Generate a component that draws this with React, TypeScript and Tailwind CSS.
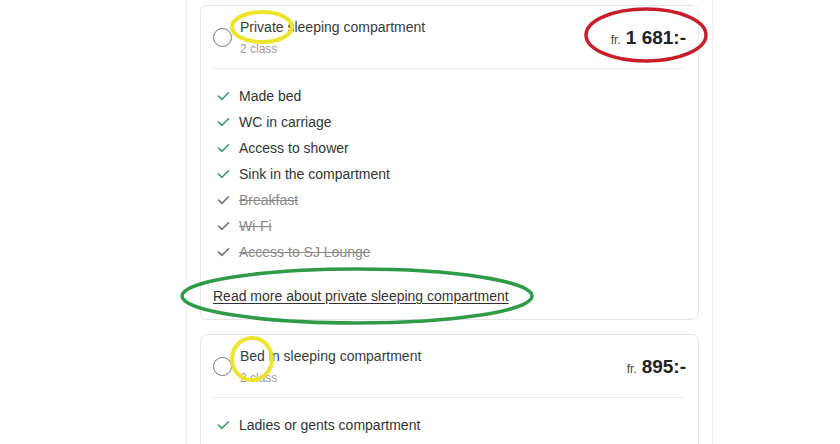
import type { JSX } from 'react'

type Feature = { label: string; included: boolean }

const privateFeatures: Feature[] = [
  { label: 'Made bed', included: true },
  { label: 'WC in carriage', included: true },
  { label: 'Access to shower', included: true },
  { label: 'Sink in the compartment', included: true },
  { label: 'Breakfast', included: false },
  { label: 'Wi-Fi', included: false },
  { label: 'Access to SJ Lounge', included: false }
]

const bedFeatures: Feature[] = [{ label: 'Ladies or gents compartment', included: true }]

function CheckMark(props: { included: boolean }): JSX.Element {
  return (
    <svg
      width="13"
      height="10"
      viewBox="0 0 13 10"
      fill="none"
      className={props.included ? 'text-[#3c9a6c]' : 'text-[#6f6f6f]'}
    >
      <path
        d="M1.5 5 L5 8.3 L11.5 1.8"
        stroke="currentColor"
        strokeWidth="1.6"
        strokeLinecap="round"
        strokeLinejoin="round"
      />
    </svg>
  )
}

function FeatureRow(props: { feature: Feature }): JSX.Element {
  const { feature } = props
  return (
    <li className="flex h-[26px] items-center gap-[9px] pl-[4px]">
      <CheckMark included={feature.included} />
      <span
        className={
          feature.included
            ? 'text-[14px] text-[#333333]'
            : 'text-[14px] text-[#8a8a8a] line-through decoration-[#8a8a8a]'
        }
      >
        {feature.label}
      </span>
    </li>
  )
}

function OptionCard(props: {
  title: string
  price: string
  features: Feature[]
  link?: string
}): JSX.Element {
  const { title, price, features, link } = props
  return (
    <div className="rounded-[7px] border border-[#e6e6e6] bg-white px-3">
      <div className="flex items-center pt-[12px] pb-[11px]">
        <span className="h-[19px] w-[19px] shrink-0 rounded-full border border-[#7a7a7a] bg-white" />
        <div className="ml-[8px] flex flex-col">
          <span className="text-[14px] leading-[18px] text-[#3a3a3a]">{title}</span>
          <span className="mt-[5px] text-[12px] leading-[16px] text-[#a0a0a0]">2 class</span>
        </div>
        <div className="ml-auto flex items-baseline gap-[5px] pt-[2px]">
          <span className="text-[12px] text-[#444444]">fr.</span>
          <span className="text-[19px] font-bold text-[#222222]">{price}</span>
        </div>
      </div>
      <div className="border-t border-[#ececec] pt-[14px] pb-[13px]">
        <ul className="flex flex-col">
          {features.map((f) => (
            <FeatureRow key={f.label} feature={f} />
          ))}
        </ul>
        {link ? (
          <a
            href="#"
            className="mt-[21px] block text-[14px] leading-[20px] text-[#333333] underline underline-offset-2"
          >
            {link}
          </a>
        ) : null}
      </div>
    </div>
  )
}

function Annotations(): JSX.Element {
  return (
    <svg className="pointer-events-none absolute inset-0" width="840" height="444" fill="none">
      <ellipse cx="262" cy="27" rx="30" ry="15" stroke="#ece52c" strokeWidth="4" />
      <ellipse cx="646" cy="35" rx="60" ry="26" stroke="#c81e2a" strokeWidth="3.5" />
      <ellipse cx="357" cy="296" rx="175" ry="27" stroke="#2f9a48" strokeWidth="3.5" />
      <ellipse cx="252" cy="359" rx="20" ry="21" stroke="#ece52c" strokeWidth="4" />
    </svg>
  )
}

export default function App(): JSX.Element {
  return (
    <div
      className="relative h-[444px] w-[840px] overflow-hidden bg-white"
      style={{ fontFamily: '"Liberation Sans", Arial, sans-serif' }}
    >
      <div className="ml-[186px] flex h-full w-[527px] flex-col gap-[14px] border-x border-[#eeeeee] pt-[5px] pr-[13px] pl-[13px]">
        <OptionCard
          title="Private sleeping compartment"
          price="1 681:-"
          features={privateFeatures}
          link="Read more about private sleeping compartment"
        />
        <OptionCard title="Bed in sleeping compartment" price="895:-" features={bedFeatures} />
      </div>
      <Annotations />
    </div>
  )
}
